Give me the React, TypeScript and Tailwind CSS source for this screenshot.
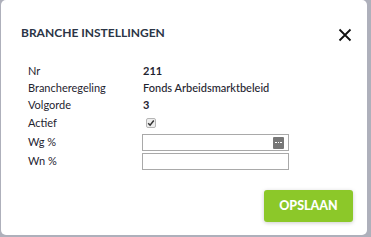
import React from "react";

export default function App() {
  return (
    <div className="w-[371px] h-[237px] bg-[#aeb0bb] overflow-hidden" style={{ fontFamily: "Lato, 'Open Sans', sans-serif" }}>
      <div className="ml-[1px] w-[366px] h-[235px] bg-white rounded-[5px] flex flex-col pt-[25px] pl-[20px] pr-[14px]">
        <div className="flex items-center justify-between h-[16px]">
          <div className="text-[12px] font-bold text-[#2b3546] tracking-[0px]">BRANCHE INSTELLINGEN</div>
          <svg width="14" height="14" viewBox="0 0 14 14" className="mr-[1px] mt-[3px]">
            <path d="M1.5 1.5 L12.5 12.5 M12.5 1.5 L1.5 12.5" stroke="#111" strokeWidth="1.8" />
          </svg>
        </div>
        <div className="mt-[22px] pl-[7px] text-[11px] text-[#1f2430] flex flex-col">
          <div className="flex items-center h-[17px]">
            <div className="w-[115px]">Nr</div>
            <div className="font-bold">211</div>
          </div>
          <div className="flex items-center h-[17px]">
            <div className="w-[115px]">Brancheregeling</div>
            <div className="font-medium">Fonds Arbeidsmarktbeleid</div>
          </div>
          <div className="flex items-center h-[17px]">
            <div className="w-[115px]">Volgorde</div>
            <div className="font-bold">3</div>
          </div>
          <div className="flex items-center h-[18px]">
            <div className="w-[118px]">Actief</div>
            <div className="w-[10px] h-[10px] border border-[#b5b5b5] bg-[#eee] rounded-[2px] flex items-center justify-center">
              <svg width="8" height="8" viewBox="0 0 8 8">
                <path d="M1.2 4.2 L3.1 6.2 L6.8 1.5" stroke="#333" strokeWidth="1.5" fill="none" />
              </svg>
            </div>
          </div>
          <div className="flex items-center h-[19px] mt-[1px]">
            <div className="w-[114px]">Wg %</div>
            <div className="w-[147px] h-[17px] border border-[#a9a9a9] flex items-center justify-end pr-[4px]">
              <div className="w-[11px] h-[12px] bg-[#777] rounded-[1px] flex items-center justify-center gap-[1px]">
                <span className="w-[1.5px] h-[1.5px] bg-white" />
                <span className="w-[1.5px] h-[1.5px] bg-white" />
                <span className="w-[1.5px] h-[1.5px] bg-white" />
              </div>
            </div>
          </div>
          <div className="flex items-center h-[19px]">
            <div className="w-[114px]">Wn %</div>
            <div className="w-[147px] h-[17px] border border-[#a9a9a9]" />
          </div>
        </div>
        <div className="flex justify-end mt-[19px]">
          <button className="w-[89px] h-[32px] bg-[#8cc829] rounded-[3px] text-white font-black text-[12.5px] shadow-[0_1px_4px_rgba(0,0,0,0.2)]">
            OPSLAAN
          </button>
        </div>
      </div>
    </div>
  );
}
